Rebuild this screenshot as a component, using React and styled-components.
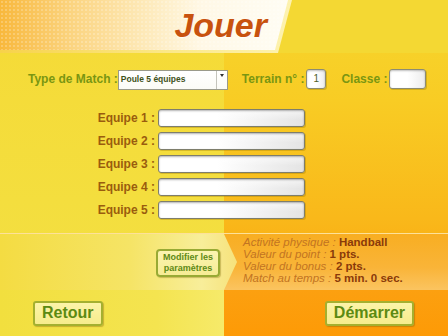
import React from "react";
import styled, { createGlobalStyle } from "styled-components";

const GlobalStyle = createGlobalStyle`
  html, body {
    margin: 0;
    padding: 0;
    background: #f5d935;
  }
  * {
    box-sizing: border-box;
  }
`;

// Page with the two coloured halves
const Page = styled.div`
  width: 448px;
  height: 336px;
  overflow: hidden;
  display: flex;
  flex-direction: column;
  font-family: "Liberation Sans", Arial, sans-serif;
  background:
    linear-gradient(180deg, #f5da36 0%, #f4de3e 60%, #f2e044 100%) left top / 224px 100% no-repeat,
    linear-gradient(180deg, #f6d62e 0%, #f8cc24 30%, #f9b81a 65%, #fc9a08 100%) right top / 224px 100% no-repeat;
`;

const Header = styled.div`
  height: 53px;
  display: flex;
  background: #f4d833;
`;

const BannerEdge = styled.div`
  width: 292px;
  height: 53px;
  background: linear-gradient(90deg, #f7d24a 0%, #fbe98a 60%, #fdf2b0 100%);
  clip-path: polygon(0 0, 100% 0, calc(100% - 14px) 100%, 0 100%);
`;

const Banner = styled.div`
  width: 288px;
  height: 50px;
  display: flex;
  align-items: center;
  justify-content: flex-end;
  padding-right: 21px;
  clip-path: polygon(0 0, 100% 0, calc(100% - 13px) 100%, 0 100%);
  background:
    radial-gradient(circle, rgba(255, 255, 255, 0.22) 1px, transparent 1.3px) 0 0 / 4px 4px,
    linear-gradient(90deg, #f8b83c 0%, #fbd480 25%, #fde9b8 50%, #fff8e6 70%, #fffdf4 100%);
`;

const Title = styled.h1`
  margin: 0;
  font-size: 34px;
  font-weight: bold;
  font-style: italic;
  line-height: 1;
  color: #c8520e;
  text-shadow: 0 1px 0 rgba(255, 255, 255, 0.6);
`;

const OptionsRow = styled.div`
  margin-top: 15px;
  padding-left: 28px;
  height: 22px;
  display: flex;
  align-items: center;
`;

const GreenLabel = styled.span`
  font-size: 12px;
  font-weight: bold;
  color: #7a9612;
  margin-left: ${(p) => p.$gap || 0}px;
  white-space: nowrap;
`;

const SelectBox = styled.div`
  width: 110px;
  height: 20px;
  margin-top: 2px;
  display: flex;
  border: 1px solid #9a9a8a;
  background: linear-gradient(180deg, #ffffff 0%, #fbfbf6 100%);
`;

const SelectText = styled.span`
  flex: 1;
  font-size: 8.5px;
  font-weight: bold;
  color: #3f521a;
  padding: 3px 0 0 2px;
`;

const ArrowBox = styled.span`
  width: 11px;
  border-left: 1px solid #c4c4bc;
  display: flex;
  justify-content: center;
  padding-top: 3px;

  &::before {
    content: "";
    border-left: 2px solid transparent;
    border-right: 2px solid transparent;
    border-top: 3px solid #333;
    height: 0;
  }
`;

const SmallInput = styled.div`
  width: ${(p) => p.$w}px;
  height: 20px;
  margin-left: 2px;
  border: 1px solid #8c8c74;
  border-radius: 3px;
  background: linear-gradient(90deg, #ffffff 0%, #ffffff 50%, #ececec 100%);
  box-shadow: inset 0 1px 2px rgba(0, 0, 0, 0.25), 1px 1px 0 rgba(150, 120, 0, 0.35);
  font-size: 10px;
  color: #50602a;
  text-align: center;
  line-height: 18px;
`;

const TeamList = styled.div`
  margin-top: 19px;
  display: grid;
  grid-template-columns: 158px 147px;
  row-gap: 5px;
  align-items: center;
`;

const TeamLabel = styled.span`
  text-align: right;
  padding-right: 3px;
  font-size: 12px;
  font-weight: bold;
  color: #9a5c0e;
  white-space: nowrap;
`;

const TeamInput = styled.div`
  height: 18px;
  border: 1px solid #7e7e6c;
  border-radius: 3px;
  background:
    linear-gradient(180deg, rgba(255, 255, 255, 0.6) 0%, rgba(255, 255, 255, 0) 60%),
    linear-gradient(90deg, #ffffff 0%, #ffffff 40%, #e4e4e4 100%);
  box-shadow: inset 0 1px 2px rgba(0, 0, 0, 0.3), 1px 1px 0 rgba(160, 120, 0, 0.35);
`;

const InfoBand = styled.div`
  margin-top: 14px;
  height: 57px;
  display: flex;
  border-top: 1px solid rgba(255, 250, 200, 0.55);
  background: linear-gradient(180deg, #f8ae22 0%, #f9b438 60%, #fbc460 100%);
`;

const ParamPane = styled.div`
  width: 237px;
  display: flex;
  align-items: center;
  justify-content: flex-end;
  padding-right: 17px;
  padding-top: 2px;
  clip-path: polygon(0 0, 224px 0, 237px 50%, 224px 100%, 0 100%);
  background: linear-gradient(90deg, #f4dc42 0%, #f5e466 55%, #f8ee9a 85%, #f6e27c 100%);
`;

const ParamButton = styled.button`
  width: 64px;
  height: 28px;
  padding: 0;
  border: 2px solid #98aa34;
  border-radius: 4px;
  background: linear-gradient(180deg, #fbf4b0 0%, #f6ec94 100%);
  box-shadow: 1px 1px 1px rgba(120, 100, 0, 0.35);
  font-family: "Liberation Sans", Arial, sans-serif;
  font-size: 9px;
  font-weight: bold;
  line-height: 11px;
  color: #5e8a16;
`;

const InfoList = styled.div`
  padding-left: 6px;
  padding-top: 2px;
  display: flex;
  flex-direction: column;
`;

const InfoLine = styled.div`
  font-size: 11.5px;
  line-height: 12px;
  white-space: nowrap;
`;

const InfoKey = styled.span`
  font-style: italic;
  color: #c27422;
`;

const InfoValue = styled.span`
  font-weight: bold;
  color: #8a3a0a;
`;

const Footer = styled.div`
  flex: 1;
  display: flex;
  align-items: center;
  justify-content: space-between;
  padding: 0 34px 0 33px;
  background:
    linear-gradient(90deg, #f2df3e 0%, #f4e450 70%, #f6ea6a 100%) left top / 224px 100% no-repeat,
    linear-gradient(180deg, #fca010 0%, #fd9a06 100%) right top / 224px 100% no-repeat;
`;

const NavButton = styled.button`
  height: 25px;
  padding: 0 7px;
  border: 2px solid #a4b030;
  border-radius: 3px;
  background: linear-gradient(180deg, #fcf4a8 0%, #f6ec8c 100%);
  box-shadow: 1px 1px 1px rgba(120, 90, 0, 0.35);
  font-family: "Liberation Sans", Arial, sans-serif;
  font-size: 16px;
  font-weight: bold;
  color: #5c8a12;
  line-height: 1;
`;

const teams = [1, 2, 3, 4, 5];

export default function App() {
  return (
    <>
      <GlobalStyle />
      <Page>
        <Header>
          <BannerEdge>
            <Banner>
              <Title>Jouer</Title>
            </Banner>
          </BannerEdge>
        </Header>

        <OptionsRow>
          <GreenLabel>Type de Match :</GreenLabel>
          <SelectBox>
            <SelectText>Poule 5 équipes</SelectText>
            <ArrowBox />
          </SelectBox>
          <GreenLabel $gap={14}>Terrain n° :</GreenLabel>
          <SmallInput $w={20}>1</SmallInput>
          <GreenLabel $gap={15}>Classe :</GreenLabel>
          <SmallInput $w={37} />
        </OptionsRow>

        <TeamList>
          {teams.map((n) => (
            <React.Fragment key={n}>
              <TeamLabel>Equipe {n} :</TeamLabel>
              <TeamInput />
            </React.Fragment>
          ))}
        </TeamList>

        <InfoBand>
          <ParamPane>
            <ParamButton>
              Modifier les
              <br />
              paramètres
            </ParamButton>
          </ParamPane>
          <InfoList>
            <InfoLine>
              <InfoKey>Activité physique : </InfoKey>
              <InfoValue>Handball</InfoValue>
            </InfoLine>
            <InfoLine>
              <InfoKey>Valeur du point : </InfoKey>
              <InfoValue>1 pts.</InfoValue>
            </InfoLine>
            <InfoLine>
              <InfoKey>Valeur du bonus : </InfoKey>
              <InfoValue>2 pts.</InfoValue>
            </InfoLine>
            <InfoLine>
              <InfoKey>Match au temps : </InfoKey>
              <InfoValue>5 min. 0 sec.</InfoValue>
            </InfoLine>
          </InfoList>
        </InfoBand>

        <Footer>
          <NavButton>Retour</NavButton>
          <NavButton>Démarrer</NavButton>
        </Footer>
      </Page>
    </>
  );
}
